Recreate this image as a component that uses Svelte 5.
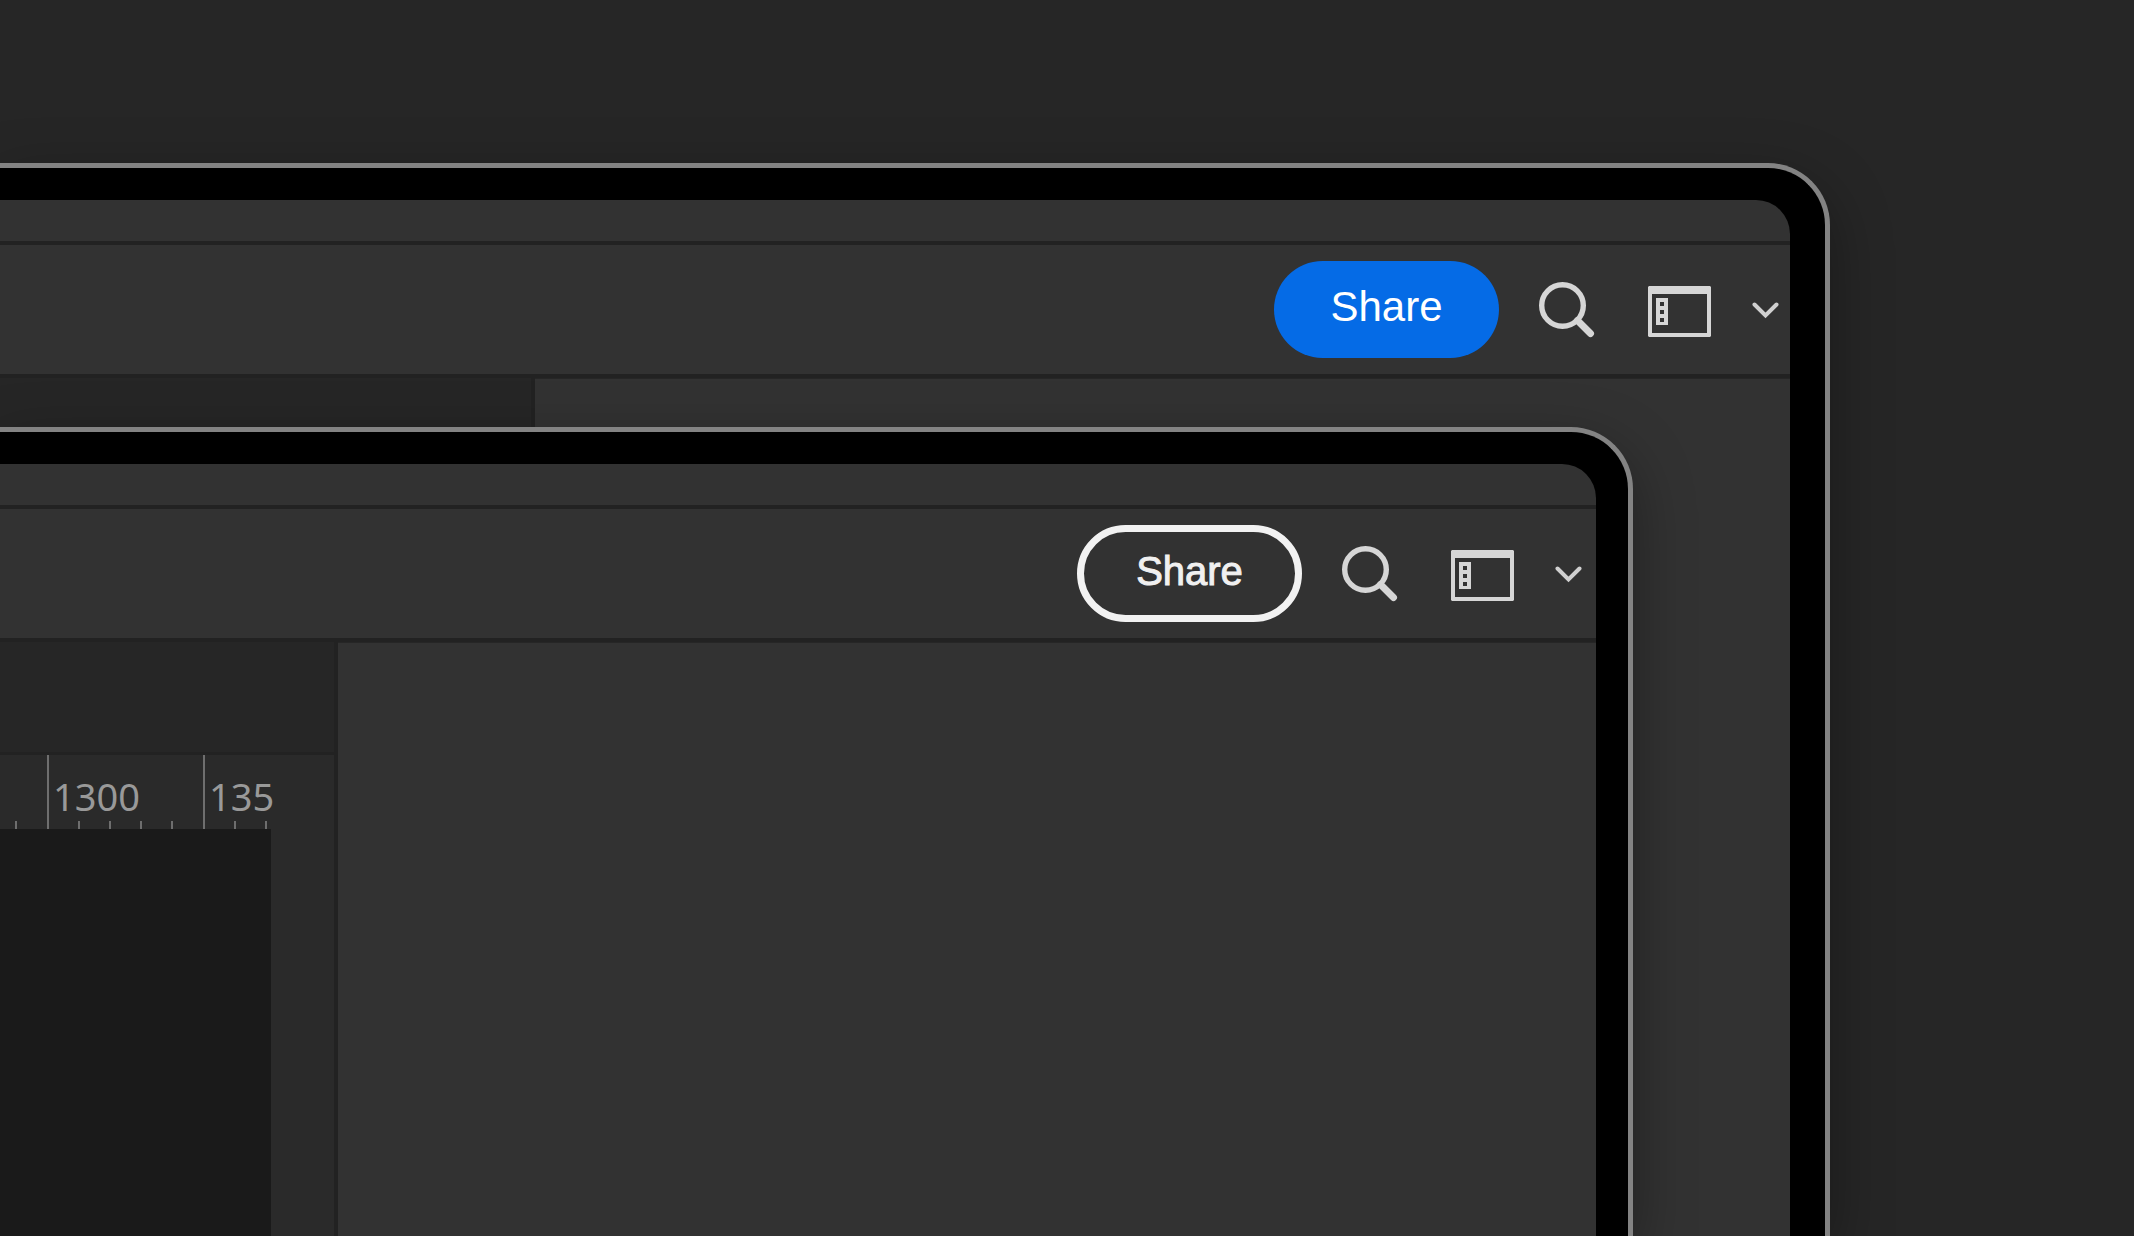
<script>
	const segments = [
		{label: '', ticks: 4},
		{label: '1300', ticks: 4},
		{label: '135', ticks: 2}
	]
</script>

{#snippet appHeader(variant)}
	<div class="titlebar"></div>
	<header class="toolbar">
		<button class="share {variant}">Share</button>
		<button class="icon search" aria-label="Search">
			<svg width="56" height="56" viewBox="0 0 56 56" fill="none" stroke="#d6d6d6">
				<circle cx="23.5" cy="23.5" r="20.8" stroke-width="5.4" />
				<path d="M38.5 38.5 51.5 51.5" stroke-width="7" stroke-linecap="round" />
			</svg>
		</button>
		<button class="icon workspace" aria-label="Workspace">
			<svg width="63" height="51" viewBox="0 0 63 51" fill="#d6d6d6" fill-rule="evenodd">
				<path d="M1 0H62L63 1V50L62 51H1L0 50V1ZM4 8V47H59V8Z" />
				<path d="M8 12H20V39H8ZM12 16V20H16V16ZM12 24V28H16V24ZM12 32V36H16V32Z" />
			</svg>
		</button>
		<button class="icon" aria-label="More workspaces">
			<svg width="27" height="19" viewBox="0 0 27 19" fill="none" stroke="#d0d0d0">
				<path d="M2.5 4.5 13.5 15.5 24.5 4.5" stroke-width="4" stroke-linecap="round" />
			</svg>
		</button>
	</header>
{/snippet}

<main>
	<section class="device back">
		<div class="screen">
			{@render appHeader('filled')}
			<div class="content">
				<div class="document"></div>
				<aside></aside>
			</div>
		</div>
	</section>

	<section class="device front">
		<div class="screen">
			{@render appHeader('outlined')}
			<div class="content">
				<div class="document">
					<div class="tabs"></div>
					<div class="ruler">
						{#each segments as segment (segment.label)}
							<div class="segment">
								<span>{segment.label}</span>
								{#each {length: segment.ticks} as _}
									<i></i>
								{/each}
							</div>
						{/each}
					</div>
					<div class="canvas"></div>
				</div>
				<aside></aside>
			</div>
		</div>
	</section>
</main>

<style>
	:global(body) {
		margin: 0;
		background: #262626;
	}

	main {
		display: grid;
		height: 100vh;
		overflow: hidden;
		background: #262626;
		font-family: 'Liberation Sans', Arial, sans-serif;
	}

	.device {
		grid-area: 1 / 1;
		display: flex;
		box-sizing: border-box;
		min-width: 0;
		min-height: 0;
		border: 5px solid #838383;
		border-width: 5px 5px 0 0;
		border-top-right-radius: 62px;
		background: #000;
		box-shadow: 0 20px 60px rgba(0, 0, 0, 0.35);
	}

	.back {
		margin: 163px 304px 0 0;
		padding: 32px 35px 0 0;
	}

	.front {
		margin: 427px 501px 0 0;
		padding: 32px 32px 0 0;
	}

	.screen {
		flex: 1;
		display: flex;
		flex-direction: column;
		min-width: 0;
		overflow: hidden;
		border-top-right-radius: 34px;
		background: #323232;
	}

	.titlebar {
		height: 41px;
		flex: none;
		border-bottom: 4px solid #222;
	}

	.toolbar {
		display: flex;
		flex: none;
		align-items: center;
		justify-content: flex-end;
		height: 129px;
		padding-right: 11px;
		border-bottom: 4px solid #222;
	}

	.front .toolbar {
		padding-right: 14px;
	}

	button {
		box-sizing: border-box;
		margin: 0;
		padding: 0;
		border: 0;
		background: none;
		font-family: inherit;
		cursor: pointer;
	}

	.share {
		width: 225px;
		height: 97px;
		margin-right: 40px;
		padding-bottom: 5px;
		border-radius: 49px;
		color: #fff;
		font-size: 42px;
	}

	.filled {
		background: #056be6;
	}

	.outlined {
		border: 7px solid #f2f2f2;
		color: #f0f0f0;
		font-size: 40px;
		-webkit-text-stroke: 1px #f0f0f0;
	}

	.icon svg {
		display: block;
	}

	.search {
		margin-right: 53px;
	}

	.workspace {
		margin: 4px 41px 0 0;
	}

	.content {
		flex: 1;
		display: flex;
		min-height: 0;
	}

	.document {
		display: flex;
		flex-direction: column;
		box-sizing: border-box;
		width: 535px;
		border-right: 4px solid #222;
		background: #262626;
	}

	.front .document {
		width: 338px;
		background: #2a2a2a;
	}

	aside {
		flex: 1;
		border-top: 1px solid #262626;
	}

	.tabs {
		height: 110px;
		flex: none;
		border-bottom: 3px solid #222;
		background: #262626;
	}

	.ruler {
		display: flex;
		flex: none;
		height: 74px;
	}

	.segment {
		display: grid;
		flex: none;
		grid-template-columns: repeat(4, 31px) 1fr;
		grid-template-rows: 66px 8px;
		box-sizing: border-box;
		width: 156px;
		border-left: 2px solid #6e6e6e;
	}

	.segment:first-child {
		margin-left: -109px;
	}

	/* the last segment stops where the panel does */
	.segment:last-child {
		width: 131px;
	}

	.segment span {
		grid-column: 1 / -1;
		padding: 15px 0 0 4px;
		color: #999;
		font-family: 'Noto Sans', sans-serif;
		font-size: 38px;
		line-height: 52px;
	}

	.segment i {
		border-right: 2px solid #6e6e6e;
	}

	.canvas {
		flex: 1;
		width: 271px;
		background: #1a1a1a;
	}
</style>
